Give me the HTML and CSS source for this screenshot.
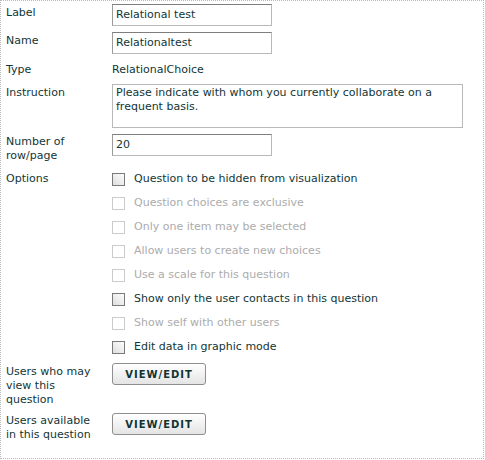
FILE: index.html
```html
<!DOCTYPE html>
<html>
<head>
<meta charset="utf-8">
<link rel="stylesheet" href="styles.css">
</head>
<body>
<div class="panel">
  <div class="row">
    <div class="lbl lbl-field">Label</div>
    <div class="val"><input class="field" type="text" value="Relational test"></div>
  </div>
  <div class="row">
    <div class="lbl lbl-field">Name</div>
    <div class="val"><input class="field" type="text" value="Relationaltest"></div>
  </div>
  <div class="row row-text">
    <div class="lbl">Type</div>
    <div class="val plain">RelationalChoice</div>
  </div>
  <div class="row">
    <div class="lbl lbl-area">Instruction</div>
    <div class="val"><textarea class="area">Please indicate with whom you currently collaborate on a
frequent basis.</textarea></div>
  </div>
  <div class="row">
    <div class="lbl">Number of<br>row/page</div>
    <div class="val"><input class="field" type="text" value="20"></div>
  </div>
  <div class="row row-options">
    <div class="lbl lbl-options">Options</div>
    <div class="val options">
      <label class="opt"><input type="checkbox" class="cb"><span>Question to be hidden from visualization</span></label>
      <label class="opt off"><input type="checkbox" class="cb" disabled><span>Question choices are exclusive</span></label>
      <label class="opt off"><input type="checkbox" class="cb" disabled><span>Only one item may be selected</span></label>
      <label class="opt off"><input type="checkbox" class="cb" disabled><span>Allow users to create new choices</span></label>
      <label class="opt off"><input type="checkbox" class="cb" disabled><span>Use a scale for this question</span></label>
      <label class="opt"><input type="checkbox" class="cb"><span>Show only the user contacts in this question</span></label>
      <label class="opt off"><input type="checkbox" class="cb" disabled><span>Show self with other users</span></label>
      <label class="opt"><input type="checkbox" class="cb"><span>Edit data in graphic mode</span></label>
    </div>
  </div>
  <div class="row">
    <div class="lbl lbl-btn">Users who may<br>view this<br>question</div>
    <div class="val"><button class="btn" type="button">VIEW/EDIT</button></div>
  </div>
  <div class="row">
    <div class="lbl lbl-btn2">Users available<br>in this question</div>
    <div class="val"><button class="btn" type="button">VIEW/EDIT</button></div>
  </div>
</div>
</body>
</html>
```
FILE: styles.css
```css
html, body {
  margin: 0;
  padding: 0;
  background: #ffffff;
}
body {
  font-family: "DejaVu Sans", Verdana, sans-serif;
  font-size: 11px;
  line-height: 14px;
  color: #123636;
}
.panel {
  box-sizing: border-box;
  width: 484px;
  height: 459px;
  border: 1px dotted #b8b8b8;
  padding: 3px 0 0 5px;
  display: flex;
  flex-direction: column;
  gap: 6px;
}
.row {
  display: grid;
  grid-template-columns: 106px 1fr;
  align-items: start;
}
.lbl {
  padding-top: 1px;
}
.lbl-field {
  padding-top: 2px;
}
.lbl-area {
  padding-top: 2px;
}
.val {
  display: flex;
  flex-direction: column;
}
.row-text .lbl,
.plain {
  box-sizing: border-box;
  padding-top: 3px;
  height: 18px;
}
.field {
  box-sizing: border-box;
  width: 160px;
  height: 22px;
  margin: 0;
  padding: 0 3px 2px;
  border: 1px solid #b9b9b9;
  border-top-color: #7e7e7e;
  border-left-color: #9a9a9a;
  font-family: "DejaVu Sans", Verdana, sans-serif;
  font-size: 11px;
  color: #123636;
  background: #fff;
  outline: none;
}
.area {
  box-sizing: border-box;
  width: 351px;
  height: 44px;
  margin: 0;
  padding: 1px 3px;
  border: 1px solid #b9b9b9;
  font-family: "DejaVu Sans", Verdana, sans-serif;
  font-size: 11px;
  line-height: 14px;
  color: #123636;
  resize: none;
  overflow: hidden;
  outline: none;
  display: block;
}
.row-options {
  margin: -2px 0;
}
.lbl-options {
  padding-top: 5px;
}
.opt {
  display: flex;
  align-items: center;
  height: 24px;
  gap: 9px;
}
.opt.off {
  color: #acacac;
}
.cb {
  appearance: none;
  -webkit-appearance: none;
  box-sizing: border-box;
  width: 13px;
  height: 13px;
  margin: 0;
  border: 1px solid #7a7a7a;
  border-radius: 0;
  background: linear-gradient(to bottom left, #fdfdfd, #dedede);
}
.cb:disabled {
  border-color: #cbcbcb;
  background: #fff;
}
.lbl-btn {
  padding-top: 2px;
}
.btn {
  box-sizing: border-box;
  width: 94px;
  height: 22px;
  margin: 0;
  padding: 0;
  border: 1px solid #8e8e8e;
  border-radius: 3px;
  background: linear-gradient(to bottom, #ffffff, #e4e4e4);
  font-family: "DejaVu Sans", Verdana, sans-serif;
  font-weight: bold;
  font-size: 10px;
  letter-spacing: 1px;
  color: #103333;
}
```
